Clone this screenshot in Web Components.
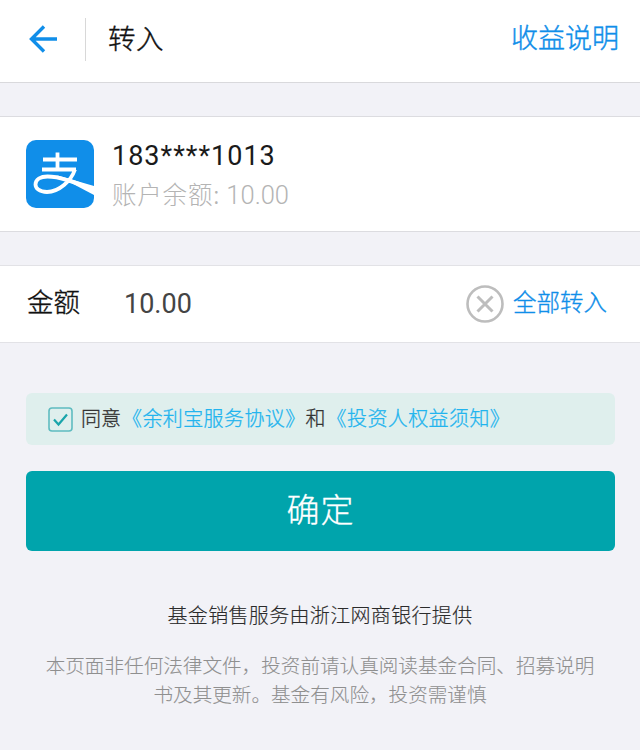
<!DOCTYPE html>
<html lang="zh">
<head>
<meta charset="utf-8">
<style>
  html, body { margin: 0; padding: 0; }
  body {
    width: 640px;
    height: 750px;
    overflow: hidden;
    background: #f2f2f7;
    font-family: Roboto, "Noto Sans CJK SC", sans-serif;
    --cjk: "Noto Sans CJK SC", sans-serif;
  }
</style>
</head>
<body>
<top-bar title-text="转入" action="收益说明"></top-bar>
<account-card phone="183****1013" balance-label="账户余额:" balance="10.00"></account-card>
<amount-row label="金额" value="10.00" action="全部转入"></amount-row>
<agree-box></agree-box>
<confirm-button>确定</confirm-button>
<page-notes></page-notes>

<script>
class TopBar extends HTMLElement {
  constructor() {
    super();
    this.attachShadow({ mode: 'open' });
    this.shadowRoot.innerHTML = `
      <style>
        :host { display: flex; align-items: center; height: 82px; background: #fff; border-bottom: 1px solid #d9d9dc; padding: 0 21px 0 28px; font-family: var(--cjk); font-weight: 300; -webkit-text-stroke: 0.4px; }
        svg { display: block; flex: none; margin-top: -4px; }
        .sep { width: 1px; height: 43px; background: #d8d8d8; margin: -3px 22px 0 27px; }
        .title { font-size: 27.5px; line-height: 36px; color: #111; flex: 1; letter-spacing: 0.5px; padding-bottom: 8px; }
        .action { font-size: 27px; line-height: 36px; color: #108ee9; padding-bottom: 8px; margin-left: -1px; }
      </style>
      <svg width="30" height="28" viewBox="0 0 30 28" fill="none" stroke="#108ee9" stroke-width="3.4">
        <path d="M16 1.5 3.5 14 16 26.5M3.5 14H29"/>
      </svg>
      <div class="sep"></div>
      <div class="title">${this.getAttribute('title-text')}</div>
      <div class="action">${this.getAttribute('action')}</div>`;
  }
}

class AccountCard extends HTMLElement {
  constructor() {
    super();
    this.attachShadow({ mode: 'open' });
    this.shadowRoot.innerHTML = `
      <style>
        :host { display: flex; align-items: center; height: 114px; margin-top: 33px; background: #fff; border-top: 1px solid #dcdce0; border-bottom: 1px solid #dcdce0; padding-left: 26px; gap: 18px; }
        svg { display: block; flex: none; }
        .phone { font-size: 27px; line-height: 36px; color: #1a1a1a; letter-spacing: 1px; padding-top: 3px; }
        .balance { font-size: 25.5px; font-weight: 300; line-height: 36px; color: #b4b4b4; margin-top: 2px; }
        .cjk { font-family: var(--cjk); font-size: 24.5px; letter-spacing: 0.8px; }
      </style>
      <svg width="68" height="68" viewBox="0 0 68 68">
        <defs><clipPath id="c"><rect width="68" height="68" rx="10"/></clipPath></defs>
        <g clip-path="url(#c)">
          <rect width="68" height="68" fill="#108ee9"/>
          <path d="M17 19.5h34M31.5 12.5v17M16 29.5h34M49 29.5C45 41 33 52 21 52 13 52 9.5 48 9.5 44.5c0-5 5-8 12-8 11 0 27 5 47 14" fill="none" stroke="#fff" stroke-width="3.8"/>
          <path d="M30 35 68 46v9Z" fill="#fff"/>
        </g>
      </svg>
      <div>
        <div class="phone">${this.getAttribute('phone')}</div>
        <div class="balance"><span class="cjk">${this.getAttribute('balance-label')}</span> ${this.getAttribute('balance')}</div>
      </div>`;
  }
}

class AmountRow extends HTMLElement {
  constructor() {
    super();
    this.attachShadow({ mode: 'open' });
    this.shadowRoot.innerHTML = `
      <style>
        :host { display: flex; align-items: center; height: 76px; margin-top: 33px; background: #fff; border-top: 1px solid #e2e2e6; border-bottom: 1px solid #e2e2e6; padding: 0 33px 0 27px; }
        .label { font-family: var(--cjk); font-weight: 300; -webkit-text-stroke: 0.4px; font-size: 26.5px; line-height: 36px; color: #111; width: 97px; padding-bottom: 6px; }
        .value { font-size: 27px; color: #444; flex: 1; }
        svg { display: block; flex: none; margin-right: 9px; }
        .action { font-family: var(--cjk); font-weight: 300; -webkit-text-stroke: 0.35px; font-size: 23.5px; line-height: 32px; color: #108ee9; padding-bottom: 6px; }
      </style>
      <div class="label">${this.getAttribute('label')}</div>
      <div class="value">${this.getAttribute('value')}</div>
      <svg width="38" height="38" viewBox="0 0 38 38" fill="none" stroke="#bdbdbd">
        <circle cx="19" cy="19" r="17.5" stroke-width="2.6"/>
        <path d="m11.5 11.5 15 15m0-15-15 15" stroke-width="3"/>
      </svg>
      <div class="action">${this.getAttribute('action')}</div>`;
  }
}

class AgreeBox extends HTMLElement {
  constructor() {
    super();
    this.attachShadow({ mode: 'open' });
    this.shadowRoot.innerHTML = `
      <style>
        :host { display: flex; align-items: center; height: 52px; margin: 50px 25px 0 26px; background: #dfefed; border-radius: 6px; padding-left: 22px; font-family: var(--cjk); font-weight: 300; -webkit-text-stroke: 0.3px; font-size: 20px; line-height: 28px; color: #333; white-space: nowrap; }
        svg { display: block; flex: none; margin-right: 8px; }
        .txt { padding-bottom: 3px; }
        a { color: #22b4ee; text-decoration: none; margin-left: 1px; letter-spacing: 0.4px; }
      </style>
      <svg width="25" height="25" viewBox="0 0 25 25" fill="none" stroke="#5fbcc0">
        <rect x="1" y="1" width="23" height="23" rx="3" stroke-width="1.6"/>
        <path d="m6 12.5 4.5 5 8.5-10" stroke="#1aa5ab" stroke-width="2.2"/>
      </svg>
      <div class="txt"><span>同意</span><a>《余利宝服务协议》</a><span>和</span><a>《投资人权益须知》</a></div>`;
  }
}

class ConfirmButton extends HTMLElement {
  constructor() {
    super();
    this.attachShadow({ mode: 'open' });
    this.shadowRoot.innerHTML = `
      <style>
        :host { display: flex; align-items: center; justify-content: center; box-sizing: border-box; height: 80px; margin: 26px 25px 0 26px; padding-bottom: 6px; background: #00a4ac; border-radius: 6px; color: #fff; font-family: var(--cjk); font-weight: 300; -webkit-text-stroke: 0.3px; font-size: 33px; letter-spacing: 1px; }
      </style>
      <slot></slot>`;
  }
}

class PageNotes extends HTMLElement {
  constructor() {
    super();
    this.attachShadow({ mode: 'open' });
    this.shadowRoot.innerHTML = `
      <style>
        :host { display: block; margin: 50px 40px 0; text-align: center; font-family: var(--cjk); font-weight: 300; }
        .main { font-size: 20px; line-height: 28px; color: #2b2b2b; letter-spacing: 0.33px; -webkit-text-stroke: 0.15px; }
        .sub { font-size: 19.6px; line-height: 29px; color: #8f8f8f; margin-top: 21px; -webkit-text-stroke: 0.1px; }
      </style>
      <div class="main">基金销售服务由浙江网商银行提供</div>
      <div class="sub">本页面非任何法律文件，投资前请认真阅读基金合同、招募说明书及其更新。基金有风险，投资需谨慎</div>`;
  }
}

customElements.define('top-bar', TopBar);
customElements.define('account-card', AccountCard);
customElements.define('amount-row', AmountRow);
customElements.define('agree-box', AgreeBox);
customElements.define('confirm-button', ConfirmButton);
customElements.define('page-notes', PageNotes);
</script>
</body>
</html>
